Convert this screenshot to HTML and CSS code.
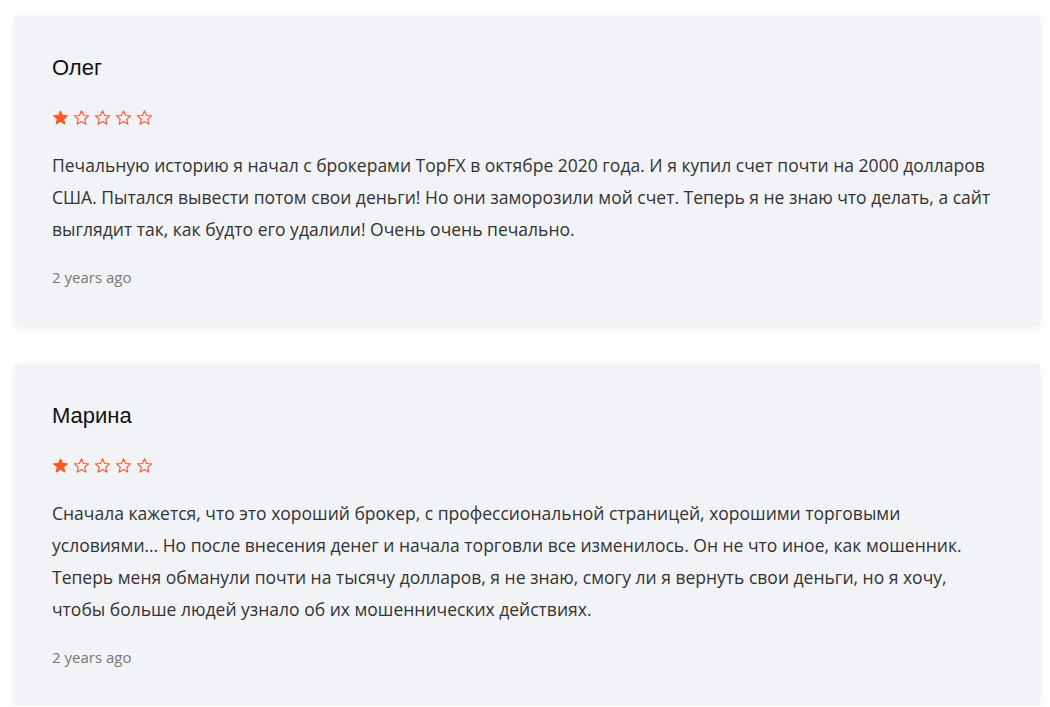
FILE: index.html
```html
<!DOCTYPE html>
<html lang="ru">
<head>
<meta charset="utf-8">
<title>Отзывы</title>
<link rel="stylesheet" href="styles.css">
</head>
<body>
<div class="reviews">
  <div class="card">
    <div class="name">Олег</div>
    <div class="stars">
      <svg class="star" viewBox="0 0 24 24"><path class="full" d="M12 2.5l2.9 6.6 7.1.6-5.4 4.7 1.6 7-6.2-3.7-6.2 3.7 1.6-7L2 9.7l7.1-.6z"/></svg>
      <svg class="star" viewBox="0 0 24 24"><path class="empty" d="M12 2.5l2.9 6.6 7.1.6-5.4 4.7 1.6 7-6.2-3.7-6.2 3.7 1.6-7L2 9.7l7.1-.6z"/></svg>
      <svg class="star" viewBox="0 0 24 24"><path class="empty" d="M12 2.5l2.9 6.6 7.1.6-5.4 4.7 1.6 7-6.2-3.7-6.2 3.7 1.6-7L2 9.7l7.1-.6z"/></svg>
      <svg class="star" viewBox="0 0 24 24"><path class="empty" d="M12 2.5l2.9 6.6 7.1.6-5.4 4.7 1.6 7-6.2-3.7-6.2 3.7 1.6-7L2 9.7l7.1-.6z"/></svg>
      <svg class="star" viewBox="0 0 24 24"><path class="empty" d="M12 2.5l2.9 6.6 7.1.6-5.4 4.7 1.6 7-6.2-3.7-6.2 3.7 1.6-7L2 9.7l7.1-.6z"/></svg>
    </div>
    <p class="text">Печальную историю я начал с брокерами TopFX в октябре 2020 года. И я купил счет почти на 2000 долларов США. Пытался вывести потом свои деньги! Но они заморозили мой счет. Теперь я не знаю что делать, а сайт выглядит так, как будто его удалили! Очень очень печально.</p>
    <div class="date">2 years ago</div>
  </div>
  <div class="card">
    <div class="name">Марина</div>
    <div class="stars">
      <svg class="star" viewBox="0 0 24 24"><path class="full" d="M12 2.5l2.9 6.6 7.1.6-5.4 4.7 1.6 7-6.2-3.7-6.2 3.7 1.6-7L2 9.7l7.1-.6z"/></svg>
      <svg class="star" viewBox="0 0 24 24"><path class="empty" d="M12 2.5l2.9 6.6 7.1.6-5.4 4.7 1.6 7-6.2-3.7-6.2 3.7 1.6-7L2 9.7l7.1-.6z"/></svg>
      <svg class="star" viewBox="0 0 24 24"><path class="empty" d="M12 2.5l2.9 6.6 7.1.6-5.4 4.7 1.6 7-6.2-3.7-6.2 3.7 1.6-7L2 9.7l7.1-.6z"/></svg>
      <svg class="star" viewBox="0 0 24 24"><path class="empty" d="M12 2.5l2.9 6.6 7.1.6-5.4 4.7 1.6 7-6.2-3.7-6.2 3.7 1.6-7L2 9.7l7.1-.6z"/></svg>
      <svg class="star" viewBox="0 0 24 24"><path class="empty" d="M12 2.5l2.9 6.6 7.1.6-5.4 4.7 1.6 7-6.2-3.7-6.2 3.7 1.6-7L2 9.7l7.1-.6z"/></svg>
    </div>
    <p class="text">Сначала кажется, что это хороший брокер, с профессиональной страницей, хорошими торговыми условиями… Но после внесения денег и начала торговли все изменилось. Он не что иное, как мошенник. Теперь меня обманули почти на тысячу долларов, я не знаю, смогу ли я вернуть свои деньги, но я хочу, чтобы больше людей узнало об их мошеннических действиях.</p>
    <div class="date">2 years ago</div>
  </div>
</div>
</body>
</html>
```

FILE: styles.css
```css
html, body {
  margin: 0;
  padding: 0;
  background: #ffffff;
}

body {
  font-family: "Open Sans", "Liberation Sans", sans-serif;
}

.reviews {
  display: flex;
  flex-direction: column;
  gap: 38px;
  padding: 16px 10px 0 15px;
}

.card {
  background: #f2f3f7;
  box-shadow: 0 2px 10px rgba(0, 0, 0, 0.07);
  padding: 38px 37px 39px 37px;
  display: flex;
  flex-direction: column;
}

.name {
  font-family: "Liberation Sans", Arial, sans-serif;
  font-size: 22px;
  line-height: 28px;
  color: #111111;
}

.stars {
  display: flex;
  gap: 4px;
  margin-top: 27px;
  height: 17px;
}

.star {
  width: 17px;
  height: 17px;
  display: block;
}

.star .full {
  fill: #ff5722;
  stroke: #ff5722;
  stroke-width: 1.4;
  stroke-linejoin: round;
}

.star .empty {
  fill: none;
  stroke: #ff5a36;
  stroke-width: 1.6;
  stroke-linejoin: round;
}

.text {
  margin: 23px 0 0 0;
  font-size: 17.5px;
  line-height: 32px;
  color: #333333;
}

.date {
  margin-top: 22px;
  font-size: 15px;
  line-height: 20px;
  color: #777777;
}
```
